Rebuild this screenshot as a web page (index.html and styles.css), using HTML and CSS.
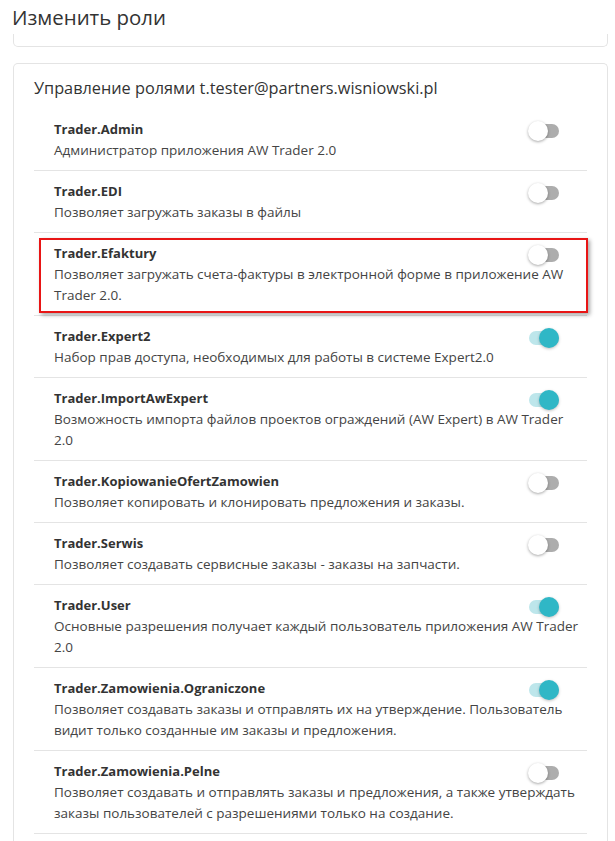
FILE: index.html
```html
<!DOCTYPE html>
<html lang="ru">
<head>
<meta charset="utf-8">
<title>Изменить роли</title>
<link rel="stylesheet" href="styles.css">
</head>
<body>
<div class="page">
  <h1 class="page-title">Изменить роли</h1>
  <div class="top-card"></div>
  <section class="card">
    <h2 class="card-title">Управление ролями t.tester@partners.wisniowski.pl</h2>
    <ul class="roles">
      <li class="role">
        <div class="role-name">Trader.Admin</div>
        <div class="role-desc">Администратор приложения AW Trader 2.0</div>
        <span class="switch"></span>
      </li>
      <li class="role">
        <div class="role-name">Trader.EDI</div>
        <div class="role-desc">Позволяет загружать заказы в файлы</div>
        <span class="switch"></span>
      </li>
      <li class="role highlight">
        <div class="role-name">Trader.Efaktury</div>
        <div class="role-desc">Позволяет загружать счета-фактуры в электронной форме в приложение AW Trader 2.0.</div>
        <span class="switch"></span>
      </li>
      <li class="role">
        <div class="role-name">Trader.Expert2</div>
        <div class="role-desc">Набор прав доступа, необходимых для работы в системе Expert2.0</div>
        <span class="switch on"></span>
      </li>
      <li class="role">
        <div class="role-name">Trader.ImportAwExpert</div>
        <div class="role-desc">Возможность импорта файлов проектов ограждений (AW Expert) в AW Trader 2.0</div>
        <span class="switch on"></span>
      </li>
      <li class="role">
        <div class="role-name">Trader.KopiowanieOfertZamowien</div>
        <div class="role-desc">Позволяет копировать и клонировать предложения и заказы.</div>
        <span class="switch"></span>
      </li>
      <li class="role">
        <div class="role-name">Trader.Serwis</div>
        <div class="role-desc">Позволяет создавать сервисные заказы - заказы на запчасти.</div>
        <span class="switch"></span>
      </li>
      <li class="role">
        <div class="role-name">Trader.User</div>
        <div class="role-desc">Основные разрешения получает каждый пользователь приложения AW Trader 2.0</div>
        <span class="switch on"></span>
      </li>
      <li class="role">
        <div class="role-name">Trader.Zamowienia.Ograniczone</div>
        <div class="role-desc">Позволяет создавать заказы и отправлять их на утверждение. Пользователь видит только созданные им заказы и предложения.</div>
        <span class="switch on"></span>
      </li>
      <li class="role">
        <div class="role-name">Trader.Zamowienia.Pelne</div>
        <div class="role-desc">Позволяет создавать и отправлять заказы и предложения, а также утверждать заказы пользователей с разрешениями только на создание.</div>
        <span class="switch"></span>
      </li>
    </ul>
  </section>
</div>
</body>
</html>
```

FILE: styles.css
```css
* { box-sizing: border-box; }
html, body { margin: 0; padding: 0; background: #fff; }
body {
  font-family: "Open Sans", "Noto Sans", "Liberation Sans", sans-serif;
  color: #333;
}
.page {
  padding: 0 7px 0 12px;
}
.page-title {
  margin: 0;
  font-size: 20.4px;
  line-height: 34px;
  font-weight: 400;
  color: #333;
}
.top-card {
  height: 13px;
  margin: 0 0 16px 1px;
  border: 1px solid #e4e4e4;
  border-top: 0;
  border-radius: 0 0 5px 5px;
}
.card {
  margin-left: 1px;
  border: 1px solid #e4e4e4;
  border-bottom: 0;
  border-radius: 5px 5px 0 0;
  padding: 12px 20px 10px 20px;
}
.card-title {
  margin: 0 0 9px 0;
  font-size: 16.3px;
  line-height: 24px;
  font-weight: 400;
  color: #333;
}
.roles {
  list-style: none;
  margin: 0;
  padding: 0;
}
.role {
  position: relative;
  padding: 10px 0 9px 20px;
  border-bottom: 1px solid #e4e4e4;
}
.role-name {
  font-size: 13px;
  line-height: 21px;
  font-weight: 700;
  color: #333;
  padding-right: 60px;
}
.role-desc {
  font-size: 13.5px;
  line-height: 21px;
  color: #444;
  padding-right: 5px;
}
.highlight::after {
  content: "";
  position: absolute;
  top: 5px;
  left: 5px;
  right: -1px;
  bottom: 2px;
  border: 2px solid #e81515;
  box-shadow: 2px 2px 4px rgba(0, 0, 0, 0.35);
  pointer-events: none;
}
.switch {
  position: absolute;
  top: 15px;
  right: 28px;
  width: 30px;
  height: 14px;
  border-radius: 7px;
  background: #adadad;
}
.switch::before {
  content: "";
  position: absolute;
  top: -3px;
  left: -1px;
  width: 20px;
  height: 20px;
  border-radius: 50%;
  background: #fff;
  box-shadow: 0 1px 3px rgba(0, 0, 0, 0.35);
}
.switch.on {
  background: #bde6eb;
}
.switch.on::before {
  left: 10px;
  background: #2fb7c6;
  box-shadow: 0 1px 3px rgba(0, 0, 0, 0.25);
}
```
